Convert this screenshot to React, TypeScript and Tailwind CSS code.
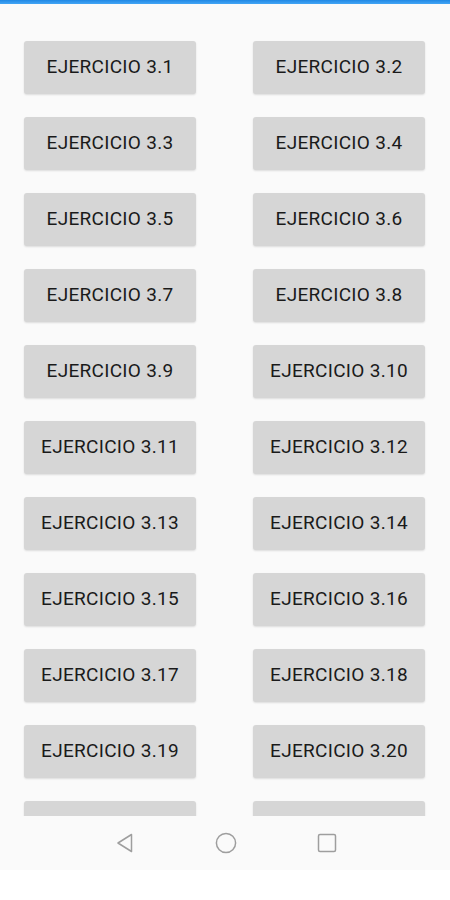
import React from 'react';

const ejercicios = Array.from({ length: 22 }, (_, i) => `EJERCICIO 3.${i + 1}`);

function NavBar() {
    return (
        <div className="h-[54px] bg-[#fafafa] flex items-center justify-center gap-[80px] shrink-0">
            <svg width="20" height="20" viewBox="0 0 20 20" className="ml-[2px]">
                <path d="M16.5 1.5 L3 10 L16.5 18.5 Z" fill="none" stroke="#9e9e9e" strokeWidth="1.5" strokeLinejoin="round" />
            </svg>
            <svg width="22" height="22" viewBox="0 0 22 22">
                <circle cx="11" cy="11" r="9.6" fill="none" stroke="#9e9e9e" strokeWidth="1.5" />
            </svg>
            <svg width="20" height="20" viewBox="0 0 20 20">
                <rect x="1.5" y="1.5" width="17" height="17" rx="1.5" fill="none" stroke="#9e9e9e" strokeWidth="1.5" />
            </svg>
        </div>
    );
}

export default function App() {
    return (
        <div className="w-[450px] h-[900px] flex flex-col bg-white overflow-hidden" style={{ fontFamily: 'Roboto, "Liberation Sans", sans-serif' }}>
            {/* status bar strip */}
            <div className="h-[4px] bg-gradient-to-b from-[#1e88e5] to-[#42a5f5] shrink-0" />

            {/* button list, clipped above the nav bar */}
            <div className="h-[812px] bg-[#fafafa] overflow-hidden shrink-0">
                <div className="grid grid-cols-[172px_172px] gap-x-[57px] gap-y-[23px] pl-[24px] pt-[37px]">
                    {ejercicios.map((label) => (
                        <button
                            key={label}
                            className="h-[53px] rounded-[3px] bg-[#d6d6d6] text-[#1a1a1a] text-[19px] font-normal tracking-[0.3px] shadow-[0_1px_2px_rgba(0,0,0,0.12)]"
                        >
                            {label}
                        </button>
                    ))}
                </div>
            </div>

            <NavBar />
            <div className="flex-1 bg-white" />
        </div>
    );
}
